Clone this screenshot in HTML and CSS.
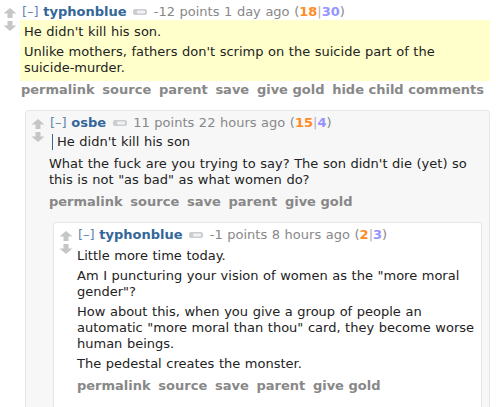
FILE: index.html
```html
<!DOCTYPE html>
<html>
<head>
<meta charset="utf-8">
<link rel="stylesheet" href="styles.css">
</head>
<body>
<div class="page">
  <div class="comment">
    <div class="arrows">
      <svg class="arrow" viewBox="0 0 14 10" width="14" height="10"><path d="M7 0 L13.5 5.5 L9.5 5.5 L9.5 10 L4.5 10 L4.5 5.5 L0.5 5.5 Z"/></svg>
      <svg class="arrow" viewBox="0 0 14 10" width="14" height="10"><path d="M7 10 L13.5 4.5 L9.5 4.5 L9.5 0 L4.5 0 L4.5 4.5 L0.5 4.5 Z"/></svg>
    </div>
    <div class="entry">
      <p class="tagline"><span class="expand">[–]</span> <span class="author">typhonblue</span> <svg class="tag" viewBox="0 0 14 6" width="14" height="6"><rect x="0" y="0" width="14" height="6" rx="2" fill="#cdcdcd"/><rect x="4" y="1.5" width="8" height="3" rx="1" fill="#edf2f8"/></svg> -12 points 1 day ago (<b class="up">18</b><span class="sep">|</span><b class="down">30</b>)</p>
      <div class="md highlight">
        <p>He didn't kill his son.</p>
        <p>Unlike mothers, fathers don't scrimp on the suicide part of the suicide-murder.</p>
      </div>
      <ul class="buttons tight"><li>permalink</li><li>source</li><li>parent</li><li>save</li><li>give gold</li><li>hide child comments</li></ul>
      <div class="child">
        <div class="comment box gray">
          <div class="arrows">
            <svg class="arrow" viewBox="0 0 14 10" width="14" height="10"><path d="M7 0 L13.5 5.5 L9.5 5.5 L9.5 10 L4.5 10 L4.5 5.5 L0.5 5.5 Z"/></svg>
            <svg class="arrow" viewBox="0 0 14 10" width="14" height="10"><path d="M7 10 L13.5 4.5 L9.5 4.5 L9.5 0 L4.5 0 L4.5 4.5 L0.5 4.5 Z"/></svg>
          </div>
          <div class="entry">
            <p class="tagline"><span class="expand">[–]</span> <span class="author">osbe</span> <svg class="tag" viewBox="0 0 14 6" width="14" height="6"><rect x="0" y="0" width="14" height="6" rx="2" fill="#cdcdcd"/><rect x="4" y="1.5" width="8" height="3" rx="1" fill="#edf2f8"/></svg> 11 points 22 hours ago (<b class="up">15</b><span class="sep">|</span><b class="down">4</b>)</p>
            <div class="md">
              <blockquote><p>He didn't kill his son</p></blockquote>
              <p>What the fuck are you trying to say? The son didn't die (yet) so this is not "as bad" as what women do?</p>
            </div>
            <ul class="buttons"><li>permalink</li><li>source</li><li>save</li><li>parent</li><li>give gold</li></ul>
            <div class="child">
              <div class="comment box white">
                <div class="arrows">
                  <svg class="arrow" viewBox="0 0 14 10" width="14" height="10"><path d="M7 0 L13.5 5.5 L9.5 5.5 L9.5 10 L4.5 10 L4.5 5.5 L0.5 5.5 Z"/></svg>
                  <svg class="arrow" viewBox="0 0 14 10" width="14" height="10"><path d="M7 10 L13.5 4.5 L9.5 4.5 L9.5 0 L4.5 0 L4.5 4.5 L0.5 4.5 Z"/></svg>
                </div>
                <div class="entry">
                  <p class="tagline"><span class="expand">[–]</span> <span class="author">typhonblue</span> <svg class="tag" viewBox="0 0 14 6" width="14" height="6"><rect x="0" y="0" width="14" height="6" rx="2" fill="#cdcdcd"/><rect x="4" y="1.5" width="8" height="3" rx="1" fill="#edf2f8"/></svg> -1 points 8 hours ago (<b class="up">2</b><span class="sep">|</span><b class="down">3</b>)</p>
                  <div class="md">
                    <p>Little more time today.</p>
                    <p>Am I puncturing your vision of women as the "more moral gender"?</p>
                    <p>How about this, when you give a group of people an automatic "more moral than thou" card, they become worse human beings.</p>
                    <p>The pedestal creates the monster.</p>
                  </div>
                  <ul class="buttons"><li>permalink</li><li>source</li><li>save</li><li>parent</li><li>give gold</li></ul>
                </div>
              </div>
            </div>
          </div>
        </div>
      </div>
    </div>
  </div>
</div>
</body>
</html>
```
FILE: styles.css
```css
html, body {
  margin: 0;
  padding: 0;
  background: #ffffff;
}
body {
  font-family: "DejaVu Sans", Verdana, sans-serif;
  font-size: 13px;
  line-height: 16px;
  word-spacing: 0.45px;
  color: #222;
  overflow: hidden;
}
.page {
  box-sizing: border-box;
  height: 407px;
  overflow: hidden;
  padding: 4px 6px 0 3px;
}
.comment {
  display: flex;
  align-items: flex-start;
}
.arrows {
  display: flex;
  flex-direction: column;
  gap: 3px;
  width: 14px;
  margin: 4px 3px 0 0;
  flex: none;
}
.arrow {
  display: block;
  fill: #c6c6c6;
}
.entry {
  flex: 1;
  min-width: 0;
}
.tagline {
  margin: 0;
  padding-left: 2px;
  color: #888;
}
.expand {
  color: #5f86ad;
}
.author {
  color: #369;
  font-weight: bold;
}
.tag {
  margin: 0 2px;
  vertical-align: 1px;
}
.up { color: #ff8b24; }
.down { color: #9494ff; }
.sep { color: #b0b0b0; }
.md {
  color: #222;
  padding: 5px 0 2px 1px;
}
.md p {
  margin: 0 0 4px;
}
.md p:last-child { margin-bottom: 0; }
.highlight {
  background: #ffffcc;
  padding: 4px 4px 5px;
}
blockquote {
  margin: -2px 0 6px 3px;
  padding-left: 4px;
  border-left: 1px solid #369;
}
.buttons {
  list-style: none;
  margin: 4px 0 0;
  padding: 0 0 0 1px;
  display: flex;
  gap: 7.7px;
  font-weight: bold;
  color: #888;
  word-spacing: 0;
}
.buttons.tight {
  margin-top: 1px;
}
.child {
  margin: 12px 0 0 5px;
}
.box {
  border: 1px solid #e6e6e6;
  border-radius: 3px;
  padding: 4px 7px 30px 5px;
}
.gray { background: #f7f7f8; }
.white {
  background: #ffffff;
  padding-right: 2px;
}
```
